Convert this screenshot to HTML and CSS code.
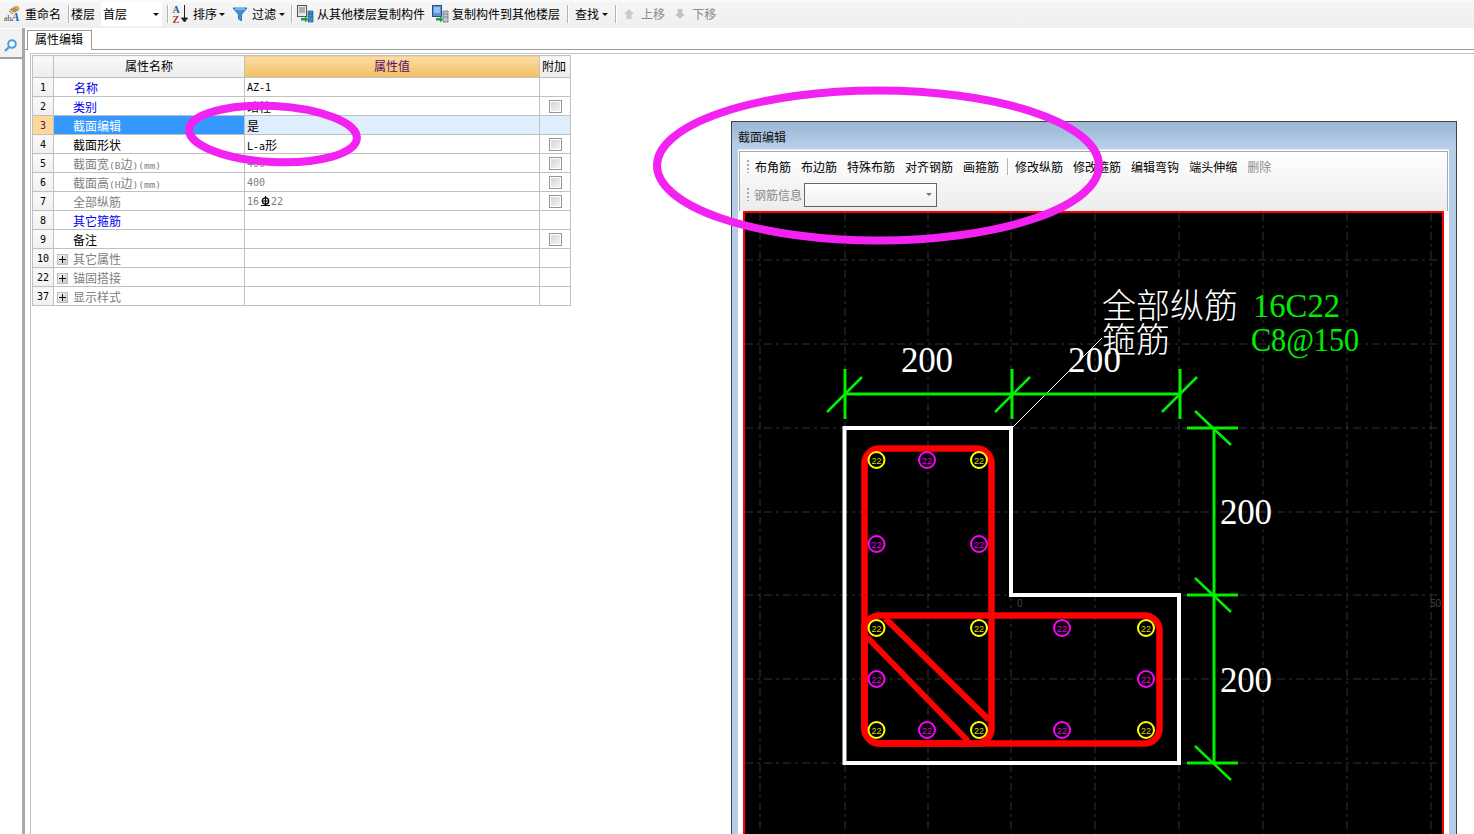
FILE: index.html
```html
<!DOCTYPE html>
<html lang="zh">
<head>
<meta charset="utf-8">
<title>属性编辑</title>
<link rel="stylesheet" href="styles.css">
</head>
<body>
<div class="app">
  <header class="toolbar">
    <svg class="ico ico-rename" viewBox="0 0 18 18"><path d="M5 5l6-4h3l2 3-6 4z" fill="#d0ab5f"/><path d="M7 4l5 3M9 3l5 3M5 6l4 3" stroke="#7d6a3a" stroke-width=".8"/><text x="0" y="16" class="ab">ab</text><text x="7.500" y="16" class="big-a">A</text></svg>
    <span class="tool t-rename">重命名</span>
    <i class="sep s-a"></i>
    <span class="tool t-floor">楼层</span>
    <div class="combo"><span>首层</span><b class="caret"></b></div>
    <i class="sep s-b"></i>
    <svg class="ico ico-sort" viewBox="0 0 17 20"><text x="0.500" y="9" class="az az-a">A</text><text x="0.500" y="19" class="az az-z">Z</text><path d="M12.500 1v16M9.500 14l3 4 3-4z" stroke="#222" fill="#222"/></svg>
    <span class="tool t-sort">排序</span><b class="caret c-sort"></b>
    <svg class="ico ico-filter" viewBox="0 0 14 15"><path d="M0 1h14L8.500 7.500V14L5.500 12V7.500z" fill="#3f8fdc" stroke="#1f66b5" stroke-width=".8"/><path d="M2 2h10" stroke="#bfe0ff"/></svg>
    <span class="tool t-filter">过滤</span><b class="caret c-filter"></b>
    <i class="sep s-c"></i>
    <svg class="ico ico-copy" viewBox="0 0 17 18"><rect x=".500" y=".500" width="9" height="11" fill="#e8e8e8" stroke="#555"/><path d="M2 3h6M2 5h6M2 7h6" stroke="#777"/><path d="M4 13h4v-2l3 3.500-3 3v-2H4z" fill="#17a03c"/><path d="M11 6h5v11h-5zM11 9h5M11 12h5" fill="#4b87c5" stroke="#1e5c9e" stroke-width=".7"/></svg>
    <span class="tool t-copy">从其他楼层复制构件</span>
    <svg class="ico ico-copy2" viewBox="0 0 17 18"><rect x=".500" y=".500" width="9" height="11" fill="#5b93d8" stroke="#234f90"/><path d="M2 3h6M2 5h6M2 7h6" stroke="#dce9f8"/><path d="M4 13h4v-2l3 3.500-3 3v-2H4z" fill="#17a03c"/><path d="M11 6h5v11h-5zM11 9h5M11 12h5" fill="#c5c9cf" stroke="#5a6470" stroke-width=".7"/></svg>
    <span class="tool t-copy2">复制构件到其他楼层</span>
    <i class="sep s-d"></i>
    <span class="tool t-find">查找</span><b class="caret c-find"></b>
    <i class="sep s-e"></i>
    <svg class="ico ico-up" viewBox="0 0 10 10"><path d="M5 0l5 5H7.500v5h-5V5H0z" fill="#c9c9c9"/></svg>
    <span class="tool off t-up">上移</span>
    <svg class="ico ico-down" viewBox="0 0 10 10"><path d="M5 10L0 5h2.500V0h5v5H10z" fill="#c4c4c4"/></svg>
    <span class="tool off t-down">下移</span>
  </header>

  <div class="work">
    <aside class="side">
      <div class="side-head">
        <svg class="ico-search" viewBox="0 0 13 13"><circle cx="8" cy="5" r="3.800" fill="#fff" stroke="#45a2e0" stroke-width="2"/><path d="M5 8l-4 4" stroke="#45a2e0" stroke-width="2.400"/></svg>
      </div>
    </aside>
    <main class="pane">
      <div class="tabbar"><div class="tab">属性编辑</div></div>
      <div class="sheet">
        <table class="grid">
          <colgroup><col class="c1"><col class="c2"><col class="c3"><col class="c4"></colgroup>
          <thead>
            <tr><th></th><th>属性名称</th><th class="th-on">属性值</th><th class="th-add">附加</th></tr>
          </thead>
          <tbody>
            <tr><td class="num">1</td><td class="name blue first">名称</td><td class="val">AZ-1</td><td></td></tr>
            <tr><td class="num">2</td><td class="name blue">类别</td><td class="val zh">暗柱</td><td class="chk"><i class="box"></i></td></tr>
            <tr class="sel"><td class="num">3</td><td class="name">截面编辑</td><td class="val zh">是</td><td></td></tr>
            <tr><td class="num">4</td><td class="name">截面形状</td><td class="val">L-a<span class="zh">形</span></td><td class="chk"><i class="box"></i></td></tr>
            <tr><td class="num">5</td><td class="name gray">截面宽<span class="lat">(B</span>边<span class="lat">)(mm)</span></td><td class="val gray">400</td><td class="chk"><i class="box"></i></td></tr>
            <tr><td class="num">6</td><td class="name gray">截面高<span class="lat">(H</span>边<span class="lat">)(mm)</span></td><td class="val gray">400</td><td class="chk"><i class="box"></i></td></tr>
            <tr><td class="num">7</td><td class="name gray">全部纵筋</td><td class="val gray">16<svg class="rebar" viewBox="0 0 11 10"><circle cx="5.500" cy="5" r="3.200" fill="none" stroke="#000" stroke-width="1.300"/><path d="M5.500 0v10M1 9.500h9M2 5h7" stroke="#000" stroke-width="1.200"/></svg>22</td><td class="chk"><i class="box"></i></td></tr>
            <tr><td class="num">8</td><td class="name blue">其它箍筋</td><td class="val"></td><td></td></tr>
            <tr><td class="num">9</td><td class="name">备注</td><td class="val"></td><td class="chk"><i class="box"></i></td></tr>
            <tr><td class="num">10</td><td class="name gray group"><i class="plus"></i>其它属性</td><td class="val"></td><td></td></tr>
            <tr><td class="num">22</td><td class="name gray group"><i class="plus"></i>锚固搭接</td><td class="val"></td><td></td></tr>
            <tr><td class="num">37</td><td class="name gray group"><i class="plus"></i>显示样式</td><td class="val"></td><td></td></tr>
          </tbody>
        </table>
      </div>
    </main>
  </div>

  <section class="window">
    <div class="win-title">截面编辑</div>
    <div class="win-body">
      <div class="win-bars">
        <div class="bar bar-one">
          <i class="grip"></i>
          <span>布角筋</span><span>布边筋</span><span>特殊布筋</span><span>对齐钢筋</span><span>画箍筋</span>
          <i class="sep bar-sep"></i>
          <span>修改纵筋</span><span>修改箍筋</span><span>编辑弯钩</span><span>端头伸缩</span><span class="off">删除</span>
        </div>
        <div class="bar bar-two">
          <i class="grip"></i>
          <span class="off">钢筋信息</span>
          <div class="win-combo"><b class="caret gray-caret"></b></div>
        </div>
      </div>
      <div class="canvas">
        <svg class="cad" viewBox="745 213 696 621">
          <g class="cad-grid">
            <path d="M760 213V834M845 213V834M928 213V834M1011 213V834M1095 213V834M1179 213V834M1263 213V834M1347 213V834M1431 213V834"/>
            <path d="M745 260H1443M745 344H1443M745 428H1443M745 512H1443M745 595H1443M745 679H1443M745 763H1443"/>
          </g>
          <text class="cad-axis" x="1017" y="607">0</text>
          <text class="cad-axis" x="1430" y="607">50</text>
          <path class="leader" d="M1012 428L1102 338"/>
          <path class="outline" d="M844.500 428H1011V595H1179V763H844.500Z"/>
          <g class="stirrup">
            <rect x="864.500" y="448.500" width="127" height="295" rx="15"/>
            <rect x="864.500" y="615.500" width="295" height="128" rx="15"/>
            <path d="M885 618L989 720M867 637L968 741"/>
          </g>
          <g class="dim">
            <path d="M845 394H1180M1214 428V763"/>
            <path d="M845 369V419M1012 369V419M1180 369V419M1187 428H1238M1187 595H1238M1187 763H1238"/>
            <path class="slash" d="M827 412L862 377M995 412L1030 377M1162 412L1197 377M1195 411L1231 445M1195 578L1231 612M1195 746L1231 780"/>
          </g>
          <g class="bar-y">
            <circle cx="876.500" cy="460" r="8"/><circle cx="979" cy="460" r="8"/>
            <circle cx="876.500" cy="628" r="8"/><circle cx="979" cy="628" r="8"/><circle cx="1146" cy="628" r="8"/>
            <circle cx="876.500" cy="730" r="8"/><circle cx="979" cy="730" r="8"/><circle cx="1146" cy="730" r="8"/>
            <text x="876.500" y="464">22</text><text x="979" y="464">22</text>
            <text x="876.500" y="632">22</text><text x="979" y="632">22</text><text x="1146" y="632">22</text>
            <text x="876.500" y="734">22</text><text x="979" y="734">22</text><text x="1146" y="734">22</text>
          </g>
          <g class="bar-m">
            <circle cx="927" cy="460" r="8"/><circle cx="876.500" cy="544" r="8"/><circle cx="979" cy="544" r="8"/>
            <circle cx="1062" cy="628" r="8"/><circle cx="876.500" cy="679" r="8"/><circle cx="1146" cy="679" r="8"/>
            <circle cx="927" cy="730" r="8"/><circle cx="1062" cy="730" r="8"/>
            <text x="927" y="464">22</text><text x="876.500" y="548">22</text><text x="979" y="548">22</text>
            <text x="1062" y="632">22</text><text x="876.500" y="683">22</text><text x="1146" y="683">22</text>
            <text x="927" y="734">22</text><text x="1062" y="734">22</text>
          </g>
          <g class="dim-text">
            <text x="901" y="372" textLength="52">200</text><text x="1068" y="372" textLength="53">200</text>
            <text x="1220" y="524" textLength="52">200</text><text x="1220" y="692" textLength="52">200</text>
          </g>
          <text class="cad-zh" x="1102" y="318">全部纵筋</text>
          <text class="cad-zh" x="1102" y="352">箍筋</text>
          <text class="cad-val" x="1253" y="317" textLength="87" lengthAdjust="spacingAndGlyphs">16C22</text>
          <text class="cad-val" x="1251" y="351" textLength="108" lengthAdjust="spacingAndGlyphs">C8@150</text>
        </svg>
      </div>
    </div>
  </section>

  <svg class="marks" viewBox="0 0 1474 834">
    <ellipse cx="273" cy="134" rx="84" ry="28" transform="rotate(3 273 134)"/>
    <ellipse cx="878" cy="165.500" rx="221" ry="75"/>
  </svg>
</div>
</body>
</html>
```
FILE: styles.css
```css
* { box-sizing: border-box; }
html, body { margin: 0; padding: 0; background: #fff; }
body { font: 12px/1 "Noto Sans CJK SC", "Liberation Sans", sans-serif; color: #000; overflow: hidden; }
.app { position: relative; width: 1474px; height: 834px; overflow: hidden; }

/* top toolbar */
.toolbar { display: flex; align-items: center; height: 28px; padding: 0 0 0 4px; background: linear-gradient(#fbfbfb, #f5f5f5 12%, #efefef); white-space: nowrap; }
.tool { flex: none; }
.off { color: #8a8a8a; }
.ico { display: block; flex: none; }
.ico-rename { width: 18px; height: 18px; margin-right: 3px; }
.ab { font: 8px "Liberation Serif", serif; fill: #444; }
.big-a { font: italic bold 12px "Liberation Serif", serif; fill: #2a5fa8; }
.t-rename { margin-right: 7px; }
.sep { display: block; flex: none; width: 1px; height: 18px; background: #b4b4b4; box-shadow: 1px 0 0 #fff; }
.s-a { margin-right: 2px; }
.t-floor { margin-right: 6px; }
.combo { display: flex; align-items: center; justify-content: space-between; width: 61px; height: 24px; padding: 0 3px 0 2px; background: #fff; margin-right: 5px; }
.caret { display: block; flex: none; width: 0; height: 0; border: 3px solid transparent; border-top: 3px solid #111; border-bottom: 0; }
.s-b { margin-right: 4px; }
.ico-sort { width: 17px; height: 20px; margin-right: 4px; }
.az { font: bold 10px "Liberation Serif", serif; }
.az-a { fill: #2a5a9c; }
.az-z { fill: #a33a3a; }
.t-sort { margin-right: 2px; }
.c-sort { margin-right: 8px; }
.ico-filter { width: 14px; height: 15px; margin-right: 5px; }
.t-filter { margin-right: 3px; }
.c-filter { margin-right: 6px; }
.s-c { margin-right: 5px; }
.ico-copy { width: 17px; height: 18px; margin-right: 3px; }
.t-copy { margin-right: 7px; }
.ico-copy2 { width: 17px; height: 18px; margin-right: 3px; }
.t-copy2 { margin-right: 7px; }
.s-d { margin-right: 7px; }
.t-find { margin-right: 3px; }
.c-find { margin-right: 7px; }
.s-e { margin-right: 8px; }
.ico-up, .ico-down { width: 10px; height: 10px; margin-right: 7px; }
.t-up { margin-right: 10px; }

/* working area */
.work { display: flex; height: 806px; }
.side { flex: none; width: 25px; border-right: 3px solid #a8a8a8; padding-top: 1px; }
.side-head { display: flex; justify-content: center; align-items: center; height: 30px; border-bottom: 2px solid #a0a0a0; background: #f2f2f2; }
.ico-search { display: block; width: 13px; height: 13px; margin: 4px 0 0 -1px; }
.pane { flex: 1; min-width: 0; }
.tabbar { height: 22px; padding: 2px 0 0 2px; border-bottom: 1px solid #9a9a9a; }
.tab { width: 65px; height: 20px; padding: 2px 0 0 7px; background: #fff; border: 1px solid #9a9a9a; border-bottom: 0; }
.sheet { margin: 3px 0 0 5px; height: 781px; border-top: 1px solid #c4c4c4; border-left: 1px solid #c4c4c4; padding: 1px 0 0 1px; }

/* property grid */
.grid { border-collapse: collapse; table-layout: fixed; width: 538px; }
.c1 { width: 21px; }
.c2 { width: 191px; }
.c3 { width: 295px; }
.c4 { width: 31px; }
.grid th, .grid td { border: 1px solid #c0c0c0; padding: 0; overflow: hidden; white-space: nowrap; }
.grid th { height: 22px; padding-bottom: 2px; font-weight: 400; background: linear-gradient(#fafafa, #ececec); text-align: center; }
.grid .th-on { background: linear-gradient(#fbdda6, #f1c062); color: #5a0a6a; }
.grid .th-add { text-align: left; padding-left: 2px; }
.grid td { height: 19px; }
.grid .num { background: linear-gradient(#fafafa, #f0f0f0); text-align: center; font: 10px "DejaVu Sans Mono", monospace; }
.grid .name { padding-left: 19px; padding-top: 2px; }
.grid .first { padding-left: 20px; }
.grid .val { padding-left: 2px; font: 10px "DejaVu Sans Mono", monospace; }
.grid .zh { font: 12px "Noto Sans CJK SC", sans-serif; }
.lat { font: 9.500px "DejaVu Sans Mono", monospace; }
.blue { color: #0000f0; }
.gray { color: #808080; }
.sel .name { background: #3399ff; color: #fff; }
.sel .val, .sel td:last-child { background: #deeefc; }
.grid .sel .num { background: #ffd799; color: #5a0a6a; }
.grid .group { padding-left: 3px; }
.plus { display: inline-block; position: relative; width: 11px; height: 11px; margin-right: 5px; vertical-align: -1px; background: linear-gradient(135deg, #f4f4f4, #c4c8d0); border: 1px solid #bdbdbd; }
.plus::before, .plus::after { content: ""; position: absolute; background: #111; }
.plus::before { left: 1px; right: 1px; top: 4px; height: 1px; }
.plus::after { top: 1px; bottom: 1px; left: 4px; width: 1px; }
.chk { text-align: center; }
.box { display: block; width: 13px; height: 13px; margin: 0 auto; border: 1px solid #969696; background: linear-gradient(135deg, #d2d2d6, #f7f7f7); box-shadow: inset 0 0 0 1px #fff; }
.rebar { display: inline-block; width: 11px; height: 10px; margin-left: 1px; vertical-align: -1px; }

/* floating editor window */
.window { position: absolute; left: 731px; top: 121px; width: 726px; height: 713px; border: 1px solid #444; border-bottom: 0; background: #b5cde8; }
.win-title { height: 27px; padding: 9px 0 0 6px; background: linear-gradient(#9bb5d3, #b9d0ea); color: #111; }
.win-body { height: 685px; margin: 0 7px 0 6px; padding: 1px 4px 0 4px; background: #fff; border-top: 1px solid #dfe7f2; }
.win-bars { height: 60px; margin: 0 -3px 0 -3px; padding: 2px 0 0 3px; border: 1px solid #a8a8a8; border-bottom: 0; background: linear-gradient(#fff, #ececec); }
.bar { display: flex; align-items: center; }
.bar-one { height: 25px; gap: 10px; padding-left: 12px; position: relative; }
.bar-two { height: 25px; margin-top: 3px; gap: 2px; padding-left: 11px; position: relative; }
.grip { position: absolute; left: 4px; top: 6px; width: 2px; height: 13px; background: repeating-linear-gradient(#aaa 0 2px, transparent 2px 4px); }
.bar-sep { height: 17px; margin: 0 -3px 0 -2px; }
.win-combo { display: flex; align-items: center; justify-content: flex-end; width: 133px; height: 24px; padding-right: 4px; border: 1px solid #666; background: linear-gradient(#fff, #f0f0f0); }
.gray-caret { border-top-color: #777; }
.canvas { height: 623px; margin: 0 1px 0 1px; border: 2px solid #f00; border-bottom: 0; background: #000; }

/* CAD drawing */
.cad { display: block; width: 696px; height: 621px; }
.cad-grid path { fill: none; stroke: #333; stroke-width: 1; stroke-dasharray: 8 4 3 4; }
.cad-axis { font: 10px "Liberation Sans", sans-serif; fill: #444; }
.leader { stroke: #fff; stroke-width: 1; fill: none; }
.outline { fill: none; stroke: #fff; stroke-width: 4; }
.stirrup rect, .stirrup path { fill: none; stroke: #f00; stroke-width: 6.500; }
.stirrup path { stroke-width: 6; }
.dim path { fill: none; stroke: #00f000; stroke-width: 3; }
.dim .slash { stroke-width: 2.500; }
.bar-y circle, .bar-m circle { fill: #000; stroke-width: 2; }
.bar-y circle { stroke: #ff0; }
.bar-m circle { stroke: #f0f; }
.bar-y text, .bar-m text { font: 9px "Liberation Sans", sans-serif; text-anchor: middle; }
.bar-y text { fill: #d8d800; }
.bar-m text { fill: #e000e0; }
.dim-text text { font: 35px "Liberation Serif", serif; fill: #fff; }
.cad-zh { font: 300 34px "Noto Sans CJK SC", sans-serif; fill: #fff; }
.cad-val { font: 33px "Liberation Serif", serif; fill: #00ee00; }

/* hand-drawn annotation on top of everything */
.marks { position: absolute; left: 0; top: 0; width: 1474px; height: 834px; pointer-events: none; }
.marks ellipse { fill: none; stroke: #f222f2; stroke-width: 8; }
```
